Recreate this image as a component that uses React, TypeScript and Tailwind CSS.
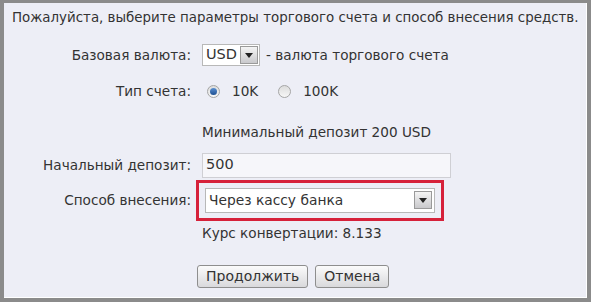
import React from "react";

function Arrow() {
  return (
    <span className="flex h-[18px] w-[18px] items-center justify-center border border-[#9a9a9a] bg-gradient-to-b from-[#f4f4f4] to-[#c9c9cc]">
      <svg width="8" height="5" viewBox="0 0 8 5">
        <path d="M0 0h8L4 5z" fill="#222" />
      </svg>
    </span>
  );
}

function Radio({ checked }: { checked?: boolean }) {
  return (
    <span className="flex h-[13px] w-[13px] items-center justify-center rounded-full border border-[#a5a5a5] bg-gradient-to-b from-[#dcdcdc] to-[#f7f7f7]">
      {checked && (
        <span className="h-[7px] w-[7px] rounded-full bg-gradient-to-b from-[#5a8fd0] to-[#1d4f92]" />
      )}
    </span>
  );
}

export default function App() {
  return (
    <div
      className="h-[302px] w-[591px] border-[4px] border-t-[3px] border-[#8b8b8b] bg-[#8b8b8b] text-[#333]"
      style={{ fontFamily: '"DejaVu Sans", Verdana, sans-serif' }}
    >
      <div className="flex h-full flex-col border-r border-b border-white bg-[#edeef6] text-[13.6px]">
        <p className="whitespace-nowrap pl-[8px] pt-[7px] text-[13.4px] leading-[16px]">
          Пожалуйста, выберите параметры торгового счета и способ внесения средств.
        </p>

        <div className="mt-[18px] flex items-center">
          <span className="w-[187px] text-right">Базовая валюта:</span>
          <div className="ml-[11px] flex h-[22px] items-center border border-[#b8b8b8] bg-white pl-[3px] pr-[1px]">
            <span className="mr-[3px] text-[14.5px]">USD</span>
            <Arrow />
          </div>
          <span className="ml-[6px]">- валюта торгового счета</span>
        </div>

        <div className="mt-[15px] flex items-center">
          <span className="w-[187px] text-right">Тип счета:</span>
          <div className="ml-[16px] flex items-center gap-[12px]">
            <Radio checked />
            <span>10K</span>
          </div>
          <div className="ml-[20px] flex items-center gap-[12px]">
            <Radio />
            <span>100K</span>
          </div>
        </div>

        <div className="mt-[21px] flex">
          <span className="ml-[198px]">Минимальный депозит 200 USD</span>
        </div>

        <div className="mt-[10px] flex items-center">
          <span className="w-[187px] text-right">Начальный депозит:</span>
          <div className="ml-[11px] flex h-[25px] w-[249px] items-center border border-[#cfcfd4] bg-[#f6f6fa] pl-[3px] text-[14.5px]">
            500
          </div>
        </div>

        <div className="mt-[2px] flex items-center">
          <span className="w-[187px] text-right">Способ внесения:</span>
          <div className="ml-[5px] border-[3px] border-[#d6213a] px-[6px] py-[5px]">
            <div className="flex h-[25px] w-[230px] items-center justify-between border border-[#b8b8b8] bg-white pl-[3px] pr-[2px] text-[13.8px]">
              <span>Через кассу банка</span>
              <Arrow />
            </div>
          </div>
        </div>

        <div className="mt-[4px] flex leading-[16px]">
          <span className="ml-[198px]">Курс конвертации: 8.133</span>
        </div>

        <div className="mt-[24px] flex gap-[7px] pl-[193px]">
          <button className="h-[23px] rounded-[3px] border border-[#8e8e8e] bg-gradient-to-b from-[#fbfbfb] to-[#d9d9dc] px-[8px] text-[14px]">
            Продолжить
          </button>
          <button className="h-[23px] rounded-[3px] border border-[#8e8e8e] bg-gradient-to-b from-[#fbfbfb] to-[#d9d9dc] px-[8px] text-[14px]">
            Отмена
          </button>
        </div>
      </div>
    </div>
  );
}
